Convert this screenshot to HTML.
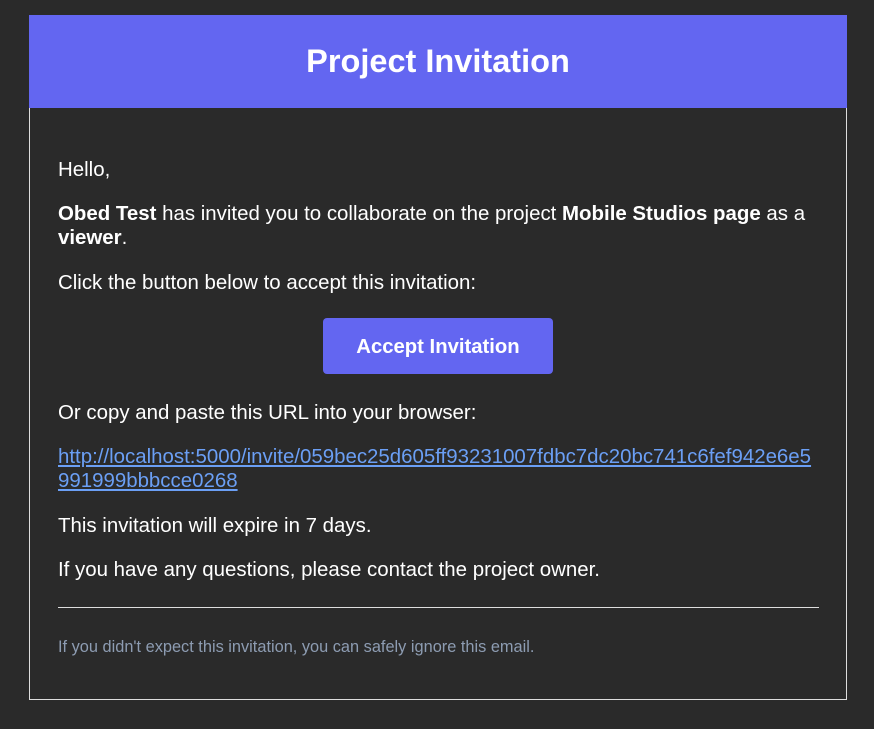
<!DOCTYPE html>
<html><head><meta charset="utf-8"><style>
body{margin:0;background:#2a2a2a;width:874px;height:729px;position:relative;font-family:"Liberation Sans",Arial,sans-serif;color:#fff;overflow:hidden}
.hdr{position:absolute;left:29px;top:15px;width:818px;height:93px;background:#6366f1;text-align:center;font-weight:bold;font-size:32.5px;line-height:93px}
.box{position:absolute;left:29px;top:108px;width:816px;height:591px;border:1px solid #ddd;border-top:none}
p{position:absolute;left:58px;margin:0;font-size:20.45px;line-height:24px;width:761px}
a{color:#6b9ff5;text-decoration:underline}
.btn{position:absolute;left:323px;top:318px;width:230px;height:56px;background:#6366f1;border-radius:4px;text-align:center;line-height:59px;font-weight:bold;font-size:20.3px}
.hr{position:absolute;left:58px;top:607px;width:761px;height:1px;background:#ddd}
.ft{font-size:16.35px;color:#8d9cb2;top:635px}
</style></head><body>
<div class="hdr">Project Invitation</div>
<div class="box"></div>
<p style="top:158px">Hello,</p>
<p style="top:202px"><b>Obed Test</b> has invited you to collaborate on the project <b>Mobile Studios page</b> as a <b>viewer</b>.</p>
<p style="top:271px">Click the button below to accept this invitation:</p>
<div class="btn">Accept Invitation</div>
<p style="top:401px">Or copy and paste this URL into your browser:</p>
<p style="top:445px"><a>http://localhost:5000/invite/059bec25d605ff93231007fdbc7dc20bc741c6fef942e6e5</a><br><a>991999bbbcce0268</a></p>
<p style="top:514px">This invitation will expire in 7 days.</p>
<p style="top:558px">If you have any questions, please contact the project owner.</p>
<div class="hr"></div>
<p class="ft">If you didn't expect this invitation, you can safely ignore this email.</p>
</body></html>
